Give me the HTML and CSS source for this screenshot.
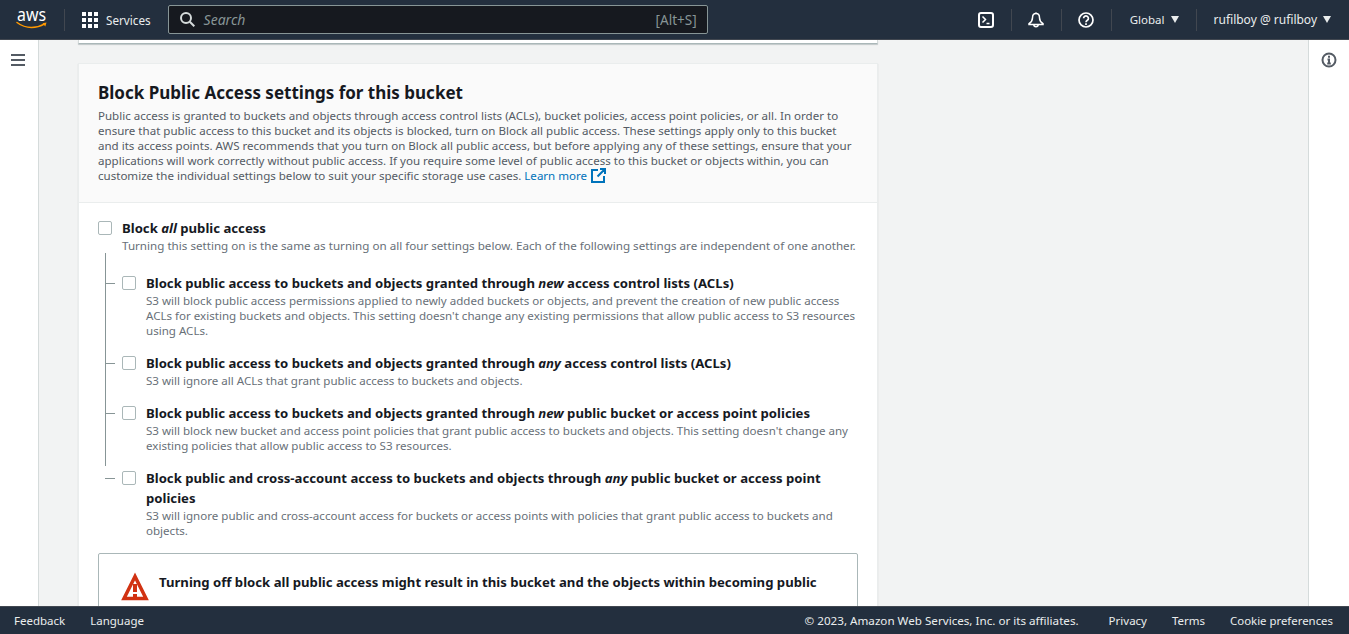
FILE: index.html
```html
<!DOCTYPE html>
<html lang="en">

<head>
  <meta charset="UTF-8">
  <meta name="viewport" content="width=device-width, initial-scale=1.0">
  <title>Block Public Access settings</title>
  <link rel="stylesheet" href="styles.css">
</head>

<body>

  <header class="topbar">
    <svg class="aws-logo" width="32" height="20" viewBox="0 0 32 20">
      <text x="1" y="10.500" class="aws-word" textLength="29" lengthAdjust="spacingAndGlyphs">aws</text>
      <path d="M1 12.500c4.500 3.400 9.500 5 14.500 5 4.500 0 9-1.300 13.200-3.700" fill="none" stroke="#f90" stroke-width="1.500" stroke-linecap="round"/>
      <path d="M26.500 13.200l4-.6-1.200 4z" fill="#f90"/>
    </svg>
    <span class="bar-sep sep-logo"></span>
    <svg class="grid-icon" width="16" height="16" viewBox="0 0 16 16" fill="#fff">
      <rect x="0" y="0" width="4" height="4"/><rect x="6" y="0" width="4" height="4"/><rect x="12" y="0" width="4" height="4"/>
      <rect x="0" y="6" width="4" height="4"/><rect x="6" y="6" width="4" height="4"/><rect x="12" y="6" width="4" height="4"/>
      <rect x="0" y="12" width="4" height="4"/><rect x="6" y="12" width="4" height="4"/><rect x="12" y="12" width="4" height="4"/>
    </svg>
    <span class="services">Services</span>
    <div class="search">
      <svg width="15" height="15" viewBox="0 0 15 15" fill="none" stroke="#d5dbdb" stroke-width="2">
        <circle cx="6" cy="6" r="5"/><path d="M9.800 9.800l4.500 4.500"/>
      </svg>
      <span class="search-text">Search</span>
      <span class="search-key">[Alt+S]</span>
    </div>
    <div class="bar-right">
      <svg class="bar-icon" width="16" height="16" viewBox="0 0 16 16" fill="none" stroke="#fff" stroke-width="2">
        <rect x="1" y="1" width="14" height="14" rx="2"/><path d="M4.500 4.500l3 3-3 3M8.500 11.500h3" stroke-width="1.500"/>
      </svg>
      <span class="bar-sep"></span>
      <svg class="bar-icon" width="16" height="16" viewBox="0 0 16 16" fill="none" stroke="#fff" stroke-width="1.500">
        <path d="M8 1.500c-2.300 0-3.500 2-3.500 4.200 0 3-1.300 4.500-3.500 6v.8h14v-.8c-2.200-1.500-3.500-3-3.500-6 0-2.200-1.200-4.200-3.500-4.200z"/><path d="M8 .5v1"/><path d="M5.800 12.500a2.200 2.200 0 0 0 4.400 0"/>
      </svg>
      <span class="bar-sep"></span>
      <svg class="bar-icon" width="16" height="16" viewBox="0 0 16 16" fill="none" stroke="#fff" stroke-width="1.700">
        <circle cx="8" cy="8" r="7"/><path d="M5.600 6.300a2.400 2.400 0 1 1 3.700 2C8.400 8.900 8 9.300 8 10.300"/><path d="M8 11.200v1.800"/>
      </svg>
      <span class="bar-sep"></span>
      <span class="bar-menu menu-global">Global<i class="caret"></i></span>
      <span class="bar-sep"></span>
      <span class="bar-menu menu-user">rufilboy @ rufilboy<i class="caret"></i></span>
    </div>
  </header>

  <div class="layout">
    <nav class="side-left">
      <svg width="14" height="12" viewBox="0 0 14 12" stroke="#545b64" stroke-width="2">
        <path d="M0 1h14M0 6h14M0 11h14"/>
      </svg>
    </nav>

    <main class="content">
      <div class="card-stub"></div>

      <section class="card">
        <div class="card-head">
          <h2>Block Public Access settings for this bucket</h2>
          <p>Public access is granted to buckets and objects through access control lists (ACLs), bucket policies, access point policies, or all. In order to ensure that public access to this bucket and its objects is blocked, turn on Block all public access. These settings apply only to this bucket and its access points. AWS recommends that you turn on Block all public access, but before applying any of these settings, ensure that your applications will work correctly without public access. If you require some level of public access to this bucket or objects within, you can customize the individual settings below to suit your specific storage use cases.
            <a href="#" class="learn">Learn more
              <svg width="15" height="15" viewBox="0 0 15 15" fill="none" stroke="#0073bb" stroke-width="2">
                <path d="M7 2H1v12h12V8M9 1h5v5M14 1L6.500 8.500"/>
              </svg>
            </a>
          </p>
        </div>

        <div class="card-body">
          <div class="option option-main">
            <span class="check"></span>
            <div>
              <div class="opt-title">Block <em>all</em> public access</div>
              <div class="opt-desc">Turning this setting on is the same as turning on all four settings below. Each of the following settings are independent of one another.</div>
            </div>
          </div>

          <div class="sub-options">
            <div class="option sub">
              <span class="check"></span>
              <div>
                <div class="opt-title">Block public access to buckets and objects granted through <em>new</em> access control lists (ACLs)</div>
                <div class="opt-desc">S3 will block public access permissions applied to newly added buckets or objects, and prevent the creation of new public access ACLs for existing buckets and objects. This setting doesn't change any existing permissions that allow public access to S3 resources using ACLs.</div>
              </div>
            </div>
            <div class="option sub">
              <span class="check"></span>
              <div>
                <div class="opt-title">Block public access to buckets and objects granted through <em>any</em> access control lists (ACLs)</div>
                <div class="opt-desc">S3 will ignore all ACLs that grant public access to buckets and objects.</div>
              </div>
            </div>
            <div class="option sub">
              <span class="check"></span>
              <div>
                <div class="opt-title">Block public access to buckets and objects granted through <em>new</em> public bucket or access point policies</div>
                <div class="opt-desc">S3 will block new bucket and access point policies that grant public access to buckets and objects. This setting doesn't change any existing policies that allow public access to S3 resources.</div>
              </div>
            </div>
            <div class="option sub">
              <span class="check"></span>
              <div>
                <div class="opt-title">Block public and cross-account access to buckets and objects through <em>any</em> public bucket or access point policies</div>
                <div class="opt-desc">S3 will ignore public and cross-account access for buckets or access points with policies that grant public access to buckets and objects.</div>
              </div>
            </div>
          </div>

          <div class="warning">
            <svg width="28" height="32" viewBox="0 0 28 32">
              <path d="M14 4.500L3 26.500h22z" fill="none" stroke="#d13212" stroke-width="3.500"/>
              <path d="M12 12h4v8h-4zM12 22h4v3h-4z" fill="#d13212"/>
            </svg>
            <div class="warning-title">Turning off block all public access might result in this bucket and the objects within becoming public</div>
          </div>
        </div>
      </section>
    </main>

    <aside class="side-right">
      <svg width="16" height="16" viewBox="0 0 16 16" fill="none" stroke="#545b64" stroke-width="2">
        <circle cx="8" cy="8" r="6.500"/><path d="M8 3.800v2M6.500 7.500H8v4M6.200 11.500h3.600"/>
      </svg>
    </aside>
  </div>

  <footer class="footer">
    <a href="#" class="foot-link feedback">Feedback</a>
    <a href="#" class="foot-link">Language</a>
    <span class="copy">© 2023, Amazon Web Services, Inc. or its affiliates.</span>
    <a href="#" class="foot-link privacy">Privacy</a>
    <a href="#" class="foot-link terms">Terms</a>
    <a href="#" class="foot-link cookies">Cookie preferences</a>
  </footer>

</body>

</html>
```

FILE: styles.css
```css
* {
  box-sizing: border-box;
}

body {
  margin: 0;
  height: 100vh;
  overflow: hidden;
  display: flex;
  flex-direction: column;
  font-family: "Noto Sans", sans-serif;
  font-size: 12px;
  color: #16191f;
  background: #f2f3f3;
}

.topbar {
  height: 40px;
  flex: none;
  display: flex;
  align-items: center;
  padding-left: 16px;
  background: #232f3e;
  border-bottom: 1px solid #414750;
  color: #eaeded;
}

.aws-logo {
  flex: none;
  overflow: visible;
}

.aws-word {
  font-family: "Noto Sans", sans-serif;
  font-size: 18px;
  fill: #fff;
}

.bar-sep {
  width: 1px;
  height: 22px;
  flex: none;
  background: #414750;
}

.sep-logo {
  margin-left: 16px;
}

.grid-icon {
  margin-left: 17px;
  flex: none;
}

.services {
  margin-left: 8px;
  font-size: 11.700px;
}

.search {
  margin-left: 17px;
  width: 540px;
  height: 29px;
  display: flex;
  align-items: center;
  padding: 0 10px 0 11px;
  background: #16191f;
  border: 1px solid #879596;
  border-radius: 2px;
}

.search-text {
  margin-left: 9px;
  font-style: italic;
  font-size: 14px;
  color: #879596;
}

.search-key {
  margin-left: auto;
  font-size: 13.500px;
  color: #879596;
}

.bar-right {
  flex: 1;
  display: flex;
  align-items: center;
  justify-content: flex-end;
  padding-right: 18px;
}

.bar-icon {
  margin: 0 16.500px;
  flex: none;
}

.bar-menu {
  display: flex;
  align-items: center;
}

.menu-global {
  margin: 0 17px 0 18px;
  font-size: 11.500px;
}

.menu-user {
  margin-left: 17px;
  font-size: 12px;
}

.caret {
  margin-left: 6px;
  border-left: 4.500px solid transparent;
  border-right: 4.500px solid transparent;
  border-top: 7px solid #eaeded;
}

.layout {
  flex: 1;
  min-height: 0;
  display: flex;
}

.side-left {
  width: 39px;
  flex: none;
  padding: 13px 0 0 11px;
  background: #fff;
  border-right: 1px solid #d5dbdb;
}

.side-right {
  width: 41px;
  flex: none;
  padding: 12px 0 0 12px;
  background: #fff;
  border-left: 1px solid #d5dbdb;
}

.content {
  flex: 1;
  min-width: 0;
  padding: 0 430px 0 39px;
  overflow: hidden;
}

.card-stub {
  height: 4px;
  background: #fff;
  border: 1px solid #d5dbdb;
  border-top: 0;
  border-bottom: 1px solid #aab7b8;
  box-shadow: 0 1px 1px rgba(0, 28, 36, 0.2);
}

.card {
  margin-top: 19px;
  background: #fff;
  border: 1px solid #eaeded;
  box-shadow: 0 1px 1px rgba(0, 28, 36, 0.15);
}

.card-head {
  height: 139px;
  padding: 16px 19px 0;
  background: #fafafa;
  border-bottom: 1px solid #eaeded;
}

.card-head h2 {
  margin: 0;
  font-size: 17px;
  line-height: 26px;
  font-weight: 700;
}

.card-head p {
  margin: 2px 0 0;
  font-size: 11.550px;
  line-height: 15px;
  color: #545b64;
}

.learn {
  color: #0073bb;
  text-decoration: none;
}

.learn svg {
  vertical-align: -3px;
  margin-left: 1px;
}

.card-body {
  padding: 15px 19px 0;
}

.option {
  display: flex;
  gap: 10px;
}

.check {
  width: 14px;
  height: 14px;
  flex: none;
  margin-top: 3px;
  background: #fff;
  border: 1px solid #aab7b8;
  border-radius: 2px;
}

.opt-title {
  font-size: 13.150px;
  line-height: 20px;
  font-weight: 700;
}

.opt-desc {
  font-size: 11.570px;
  line-height: 15px;
  color: #687078;
}

.option-main .opt-desc {
  font-size: 11.630px;
}

/* vertical rail stops at the last connector, which forms the corner */
.sub-options {
  position: relative;
  margin-left: 7px;
  padding: 20px 0 0 17px;
}

.sub-options::before {
  content: "";
  position: absolute;
  left: 0;
  top: 0;
  bottom: 72px;
  width: 1px;
  background: #879596;
}

.sub {
  position: relative;
  margin-bottom: 15px;
}

.sub::before {
  content: "";
  position: absolute;
  left: -17px;
  top: 10px;
  width: 10px;
  height: 1px;
  background: #879596;
}

.warning {
  margin-top: 10px;
  height: 80px;
  display: flex;
  gap: 10px;
  padding: 18px 22px;
  border: 1px solid #aab7b8;
  border-radius: 2px;
}

.warning svg {
  flex: none;
}

.warning-title {
  font-size: 13.150px;
  line-height: 20px;
  font-weight: 700;
  white-space: nowrap;
}

.footer {
  height: 28px;
  flex: none;
  display: flex;
  align-items: center;
  padding: 0 16px 0 14px;
  background: #232f3e;
  border-top: 1px solid #414750;
  font-size: 11.500px;
  color: #eaeded;
}

.foot-link {
  color: #eaeded;
  text-decoration: none;
}

.feedback {
  margin-right: 25px;
}

.copy {
  margin-left: auto;
  font-size: 11.650px;
}

.privacy {
  margin-left: 30px;
}

.terms,
.cookies {
  margin-left: 25px;
}

.cookies {
  font-size: 11.400px;
}
```
